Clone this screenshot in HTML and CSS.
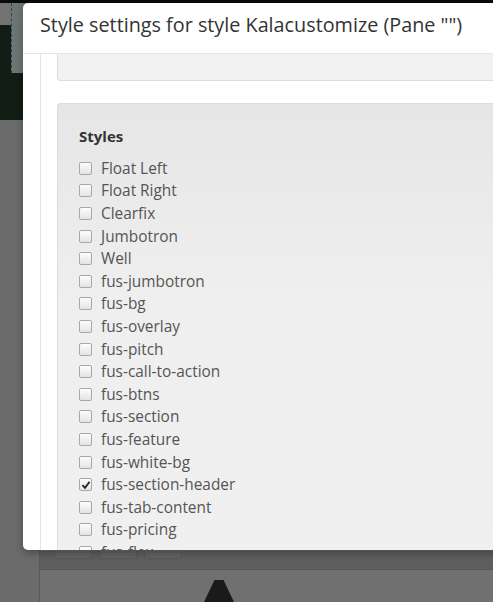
FILE: index.html
```html
<!DOCTYPE html>
<html>
<head>
  <title>Style settings</title>
  <link rel="stylesheet" href="styles.css">
</head>
<body>
  <div class="page">
    <div class="page-top"></div>
    <div class="page-main">
      <div class="page-side">
        <div class="side-hero">
          <div class="hero-corner"></div>
          <div class="hero-strip"></div>
        </div>
      </div>
      <div class="page-content">
        <div class="toolbar">
          <span class="tool-btn"></span>
          <span class="tool-btn"></span>
          <span class="tool-btn"></span>
        </div>
        <div class="stage">
          <div class="stage-arrow"></div>
        </div>
      </div>
    </div>
  </div>

  <div class="modal">
    <div class="modal-header">
      <h4 class="modal-title">Style settings for style Kalacustomize (Pane "")</h4>
    </div>
    <div class="modal-body">
      <div class="panel panel-scrolled"></div>
      <div class="panel panel-styles">
        <h5 class="panel-title">Styles</h5>
        <div class="check-list">
          <label class="check"><span class="box"></span>Float Left</label>
          <label class="check"><span class="box"></span>Float Right</label>
          <label class="check"><span class="box"></span>Clearfix</label>
          <label class="check"><span class="box"></span>Jumbotron</label>
          <label class="check"><span class="box"></span>Well</label>
          <label class="check"><span class="box"></span>fus-jumbotron</label>
          <label class="check"><span class="box"></span>fus-bg</label>
          <label class="check"><span class="box"></span>fus-overlay</label>
          <label class="check"><span class="box"></span>fus-pitch</label>
          <label class="check"><span class="box"></span>fus-call-to-action</label>
          <label class="check"><span class="box"></span>fus-btns</label>
          <label class="check"><span class="box"></span>fus-section</label>
          <label class="check"><span class="box"></span>fus-feature</label>
          <label class="check"><span class="box"></span>fus-white-bg</label>
          <label class="check"><span class="box checked"><svg width="10" height="10" viewBox="0 0 10 10"><path d="M1.5 5.2 L4 7.8 L8.6 1.8" fill="none" stroke="#222" stroke-width="1.8"/></svg></span>fus-section-header</label>
          <label class="check"><span class="box"></span>fus-tab-content</label>
          <label class="check"><span class="box"></span>fus-pricing</label>
          <label class="check"><span class="box"></span>fus-flex</label>
        </div>
      </div>
    </div>
  </div>
</body>
</html>
```

FILE: styles.css
```css
body {
  margin: 0;
  height: 602px;
  overflow: hidden;
  background-color: #6b6b6b;
  font-family: "Open Sans", Arial, sans-serif;
}
.page {
  display: flex;
  flex-direction: column;
  height: 602px;
}
.page-top {
  height: 3px;
  background-color: #0a0a0a;
}
.page-main {
  display: flex;
  flex: 1;
}
.page-side {
  width: 40px;
  border-right: 1px solid #5a5a5a;
  box-sizing: border-box;
}
.side-hero {
  width: 23px;
  height: 117px;
  background-color: #101c14;
  position: relative;
}
.hero-corner {
  width: 11px;
  height: 22px;
  background-color: #727272;
}
.hero-strip {
  position: absolute;
  left: 11px;
  top: 0;
  width: 12px;
  height: 70px;
  background-color: #6d7676;
  border-left: 1px dashed #3a4040;
}
.page-content {
  flex: 1;
  display: flex;
  flex-direction: column;
  justify-content: flex-end;
}
.toolbar {
  height: 18px;
  background-color: #5e5e5e;
  border-bottom: 1px solid #575757;
  display: flex;
  gap: 7px;
  padding-left: 14px;
}
.tool-btn {
  width: 36px;
  height: 7px;
  border: 1px solid #585858;
  border-top: 0;
  border-radius: 0 0 3px 3px;
  background-color: #636363;
}
.stage {
  height: 32px;
  background-color: #707070;
  display: flex;
  align-items: flex-end;
  padding-left: 164px;
}
.stage-arrow {
  width: 30px;
  height: 22px;
  background-color: #1a1a1a;
  clip-path: polygon(35% 0, 65% 0, 100% 100%, 0 100%);
}
.modal {
  position: absolute;
  left: 23px;
  top: 3px;
  width: 520px;
  height: 547px;
  background-color: #fff;
  border-radius: 5px;
  overflow: hidden;
  box-shadow: 0 3px 9px rgba(0,0,0,0.3);
}
.modal-header {
  height: 50px;
  border-bottom: 1px solid #e5e5e5;
  padding-left: 17px;
}
.modal-title {
  margin: 0;
  padding-top: 8px;
  font-size: 19.8px;
  line-height: 28px;
  font-weight: normal;
  color: #333;
}
.modal-body {
  margin-left: 17px;
  border-left: 1px solid #e3e3e3;
  padding-left: 16px;
  height: 500px;
}
.panel {
  background-color: #f2f2f2;
  border: 1px solid #dcdcdc;
}
.panel-scrolled {
  height: 26px;
  border-top: 0;
  border-right: 0;
  border-radius: 0 0 0 4px;
  margin-bottom: 22px;
}
.panel-styles {
  border-right: 0;
  border-bottom: 0;
  border-radius: 4px 0 0 0;
  background: linear-gradient(#e6e6e6, #efefef 200px, #f0f0f0);
  padding: 20px 0 0 21px;
  height: 480px;
}
.panel-title {
  margin: 0 0 9px;
  font-size: 15px;
  line-height: 24px;
  font-weight: bold;
  color: #333;
}
.check {
  display: flex;
  align-items: center;
  height: 22.6px;
  font-size: 15.4px;
  color: #555;
}
.box {
  width: 11px;
  height: 11px;
  margin-right: 9px;
  border: 1px solid #a8a8a8;
  border-radius: 2px;
  background: linear-gradient(#fdfdfd, #e4e4e4);
  display: flex;
  align-items: center;
  justify-content: center;
}
```
